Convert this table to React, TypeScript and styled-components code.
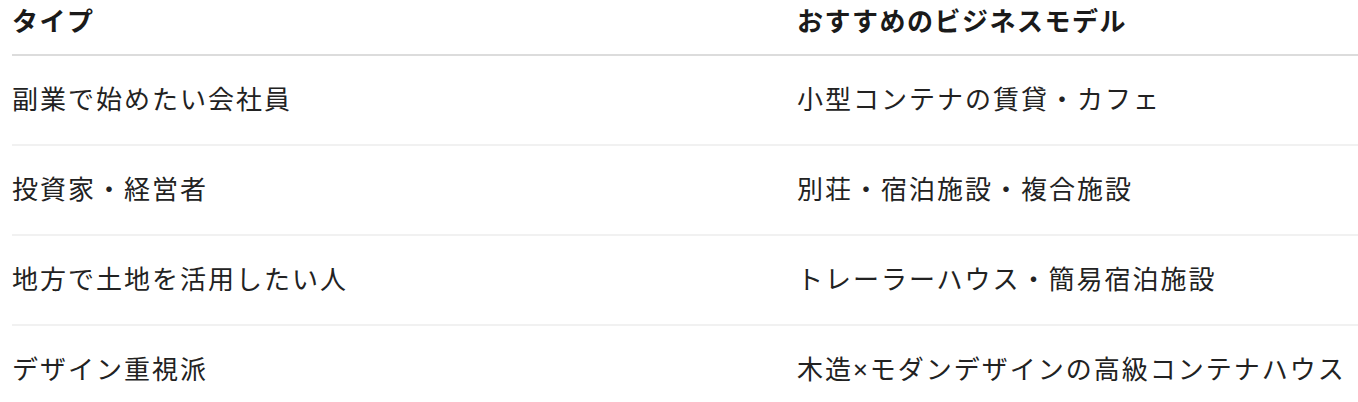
import React from 'react';
import styled, { createGlobalStyle } from 'styled-components';

const GlobalStyle = createGlobalStyle`
  html, body {
    margin: 0;
    padding: 0;
    background: #fff;
  }
  body {
    font-family: "Noto Sans", "Noto Sans CJK JP", sans-serif;
    color: #222;
  }
`;

const Wrap = styled.div`
  padding-left: 12px;
`;

const Table = styled.div`
  display: grid;
  grid-template-columns: 785px 1fr;
`;

const HeadCell = styled.div`
  height: 56px;
  padding-top: 6px;
  box-sizing: border-box;
  border-bottom: 2px solid #dcdcdc;
  font-size: 26px;
  font-weight: 700;
  letter-spacing: 1.5px;
  line-height: 30px;
  color: #1a1a1a;
  white-space: nowrap;
`;

const Cell = styled.div<{ $last?: boolean }>`
  height: 90px;
  box-sizing: border-box;
  display: flex;
  align-items: center;
  padding-bottom: 5px;
  border-bottom: 2px solid ${p => (p.$last ? 'transparent' : '#f1f1f1')};
  font-size: 26px;
  letter-spacing: 2px;
  color: #222;
  white-space: nowrap;
`;

const rows = [
  ['副業で始めたい会社員', '小型コンテナの賃貸・カフェ'],
  ['投資家・経営者', '別荘・宿泊施設・複合施設'],
  ['地方で土地を活用したい人', 'トレーラーハウス・簡易宿泊施設'],
  ['デザイン重視派', '木造×モダンデザインの高級コンテナハウス'],
];

export default function App() {
  return (
    <>
      <GlobalStyle />
      <Wrap>
        <Table>
          <HeadCell>タイプ</HeadCell>
          <HeadCell>おすすめのビジネスモデル</HeadCell>
          {rows.map((r, i) => (
            <React.Fragment key={r[0]}>
              <Cell $last={i === rows.length - 1}>{r[0]}</Cell>
              <Cell $last={i === rows.length - 1}>{r[1]}</Cell>
            </React.Fragment>
          ))}
        </Table>
      </Wrap>
    </>
  );
}
